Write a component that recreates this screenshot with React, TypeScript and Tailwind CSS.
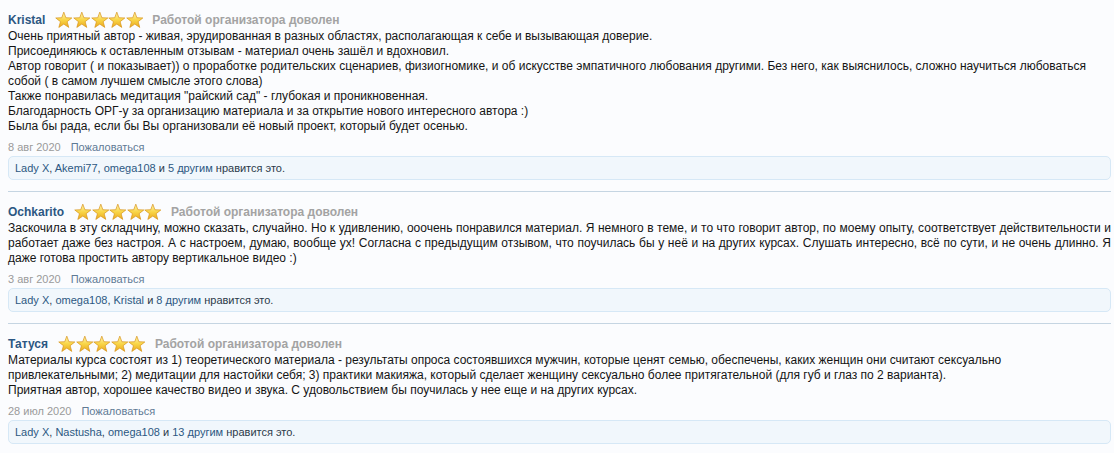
import React from "react";

function Star({ id }: { id: string }) {
  return (
    <svg width="17.6" height="18" viewBox="0 0 24 24" className="block">
      <defs>
        <linearGradient id={id} x1="0" y1="0" x2="0" y2="1">
          <stop offset="0" stopColor="#fff6b5" />
          <stop offset="0.5" stopColor="#f9d648" />
          <stop offset="1" stopColor="#eaa91e" />
        </linearGradient>
      </defs>
      <path
        d="M12 1.3 L14.82 8.92 L22.94 9.25 L16.56 14.28 L18.76 22.1 L12 17.6 L5.24 22.1 L7.44 14.28 L1.06 9.25 L9.18 8.92 Z"
        fill={`url(#${id})`}
        stroke="#d8961c"
        strokeWidth="1"
        strokeLinejoin="round"
      />
    </svg>
  );
}

function Stars({ k }: { k: string }) {
  return (
    <div className="flex items-center">
      {[0, 1, 2, 3, 4].map((i) => (
        <Star key={i} id={`g-${k}-${i}`} />
      ))}
    </div>
  );
}

type Review = {
  name: string;
  body: React.ReactNode;
  justify?: boolean;
  date: string;
  likers: string[];
  others: string;
};

const reviews: Review[] = [
  {
    name: "Kristal",
    body: (
      <>
        Очень приятный автор - живая, эрудированная в разных областях, располагающая к себе и вызывающая доверие.
        <br />
        Присоединяюсь к оставленным отзывам - материал очень зашёл и вдохновил.
        <br />
        Автор говорит ( и показывает)) о проработке родительских сценариев, физиогномике, и об искусстве эмпатичного любования другими. Без него, как выяснилось, сложно научиться любоваться собой ( в самом лучшем смысле этого слова)
        <br />
        Также понравилась медитация "райский сад" - глубокая и проникновенная.
        <br />
        Благодарность ОРГ-у за организацию материала и за открытие нового интересного автора :)
        <br />
        Была бы рада, если бы Вы организовали её новый проект, который будет осенью.
      </>
    ),
    date: "8 авг 2020",
    likers: ["Lady X", "Akemi77", "omega108"],
    others: "5 другим",
  },
  {
    name: "Ochkarito",
    justify: true,
    body: (
      <>
        Заскочила в эту складчину, можно сказать, случайно. Но к удивлению, ооочень понравился материал. Я немного в теме, и то что говорит автор, по моему опыту, соответствует действительности и работает даже без настроя. А с настроем, думаю, вообще ух! Согласна с предыдущим отзывом, что поучилась бы у неё и на других курсах. Слушать интересно, всё по сути, и не очень длинно. Я даже готова простить автору вертикальное видео :)
      </>
    ),
    date: "3 авг 2020",
    likers: ["Lady X", "omega108", "Kristal"],
    others: "8 другим",
  },
  {
    name: "Татуся",
    body: (
      <>
        Материалы курса состоят из 1) теоретического материала - результаты опроса состоявшихся мужчин, которые ценят семью, обеспечены, каких женщин они считают сексуально привлекательными; 2) медитации для настойки себя; 3) практики макияжа, который сделает женщину сексуально более притягательной (для губ и глаз по 2 варианта).
        <br />
        Приятная автор, хорошее качество видео и звука. С удовольствием бы поучилась у нее еще и на других курсах.
      </>
    ),
    date: "28 июл 2020",
    likers: ["Lady X", "Nastusha", "omega108"],
    others: "13 другим",
  },
];

export default function App() {
  return (
    <div
      className="min-h-[453px] w-full bg-[#fbfcfe] pl-2 pr-[3px] text-[12px] text-[#141414]"
      style={{ fontFamily: '"Liberation Sans", Arial, sans-serif' }}
    >
      {reviews.map((r, idx) => (
        <div
          key={r.name}
          className={`pt-[11px] pb-[11px] ${idx < reviews.length - 1 ? "border-b border-[#c5d5e2]" : ""}`}
        >
          <div className="flex items-center h-[18px]">
            <span className="font-bold text-[#2c5782]">{r.name}</span>
            <span className="ml-[10px]">
              <Stars k={String(idx)} />
            </span>
            <span className="ml-[9px] font-bold text-[#a3a3a3]">Работой организатора доволен</span>
          </div>
          <div className={`leading-[15px] ${r.justify ? "text-justify" : ""}`}>{r.body}</div>
          <div className="mt-[6px] flex gap-[10px] text-[11px] leading-[14px]">
            <span className="text-[#9a9a9a]">{r.date}</span>
            <span className="text-[#5f7a95]">Пожаловаться</span>
          </div>
          <div className="mt-[2px] rounded-[5px] border border-[#d6e8f6] bg-[#f1f7fc] px-[6px] py-[4px] text-[11px] leading-[14px] text-[#2b3a4a]">
            {r.likers.map((l, i) => (
              <React.Fragment key={l}>
                <span className="text-[#2c5782]">{l}</span>
                {i < r.likers.length - 1 ? ", " : ""}
              </React.Fragment>
            ))}{" "}
            и <span className="text-[#2c5782]">{r.others}</span> нравится это.
          </div>
        </div>
      ))}
    </div>
  );
}
